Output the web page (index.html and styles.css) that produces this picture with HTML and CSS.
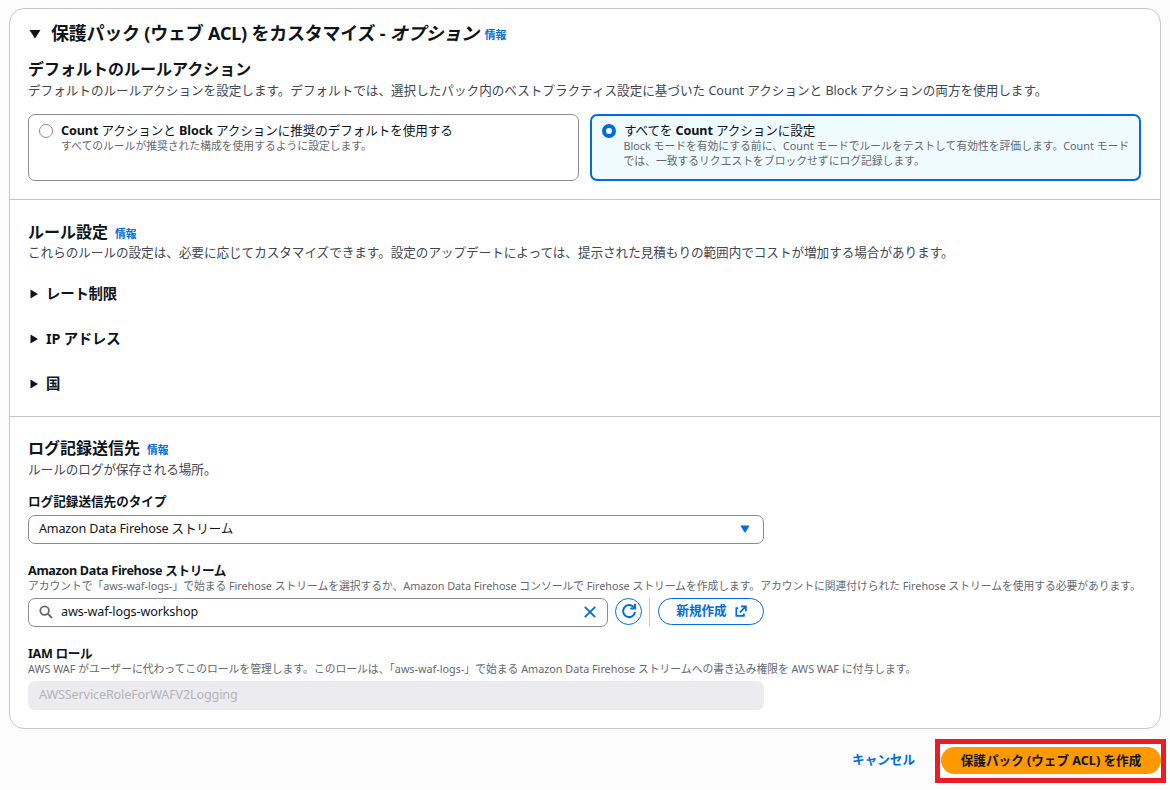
FILE: index.html
```html
<!DOCTYPE html>
<html lang="ja">
<head>
    <meta charset="UTF-8">
    <meta name="viewport" content="width=device-width, initial-scale=1.0">
    <title>保護パック (ウェブ ACL) を作成</title>
    <link rel="stylesheet" href="styles.css">
</head>
<body>
    <main class="card">
        <section class="section customize">
            <h1 class="card-title">
                <svg class="caret-down" viewBox="0 0 12 10"><path d="M.5 1h11L6 9.5z"/></svg>
                <span class="card-title-text">保護パック (ウェブ ACL) をカスタマイズ - <i>オプション</i></span>
                <a class="info" href="#">情報</a>
            </h1>
            <h2><span class="h2-text">デフォルトのルールアクション</span></h2>
            <p class="description desc-action">デフォルトのルールアクションを設定します。デフォルトでは、選択したパック内のベストプラクティス設定に基づいた Count アクションと Block アクションの両方を使用します。</p>
            <div class="tiles">
                <label class="tile">
                    <span class="radio"></span>
                    <span class="tile-body">
                        <span class="tile-label"><b>Count</b> アクションと <b>Block</b> アクションに推奨のデフォルトを使用する</span>
                        <span class="hint">すべてのルールが推奨された構成を使用するように設定します。</span>
                    </span>
                </label>
                <label class="tile selected">
                    <span class="radio"></span>
                    <span class="tile-body">
                        <span class="tile-label">すべてを <b>Count</b> アクションに設定</span>
                        <span class="hint">Block モードを有効にする前に、Count モードでルールをテストして有効性を評価します。Count モード<br>では、一致するリクエストをブロックせずにログ記録します。</span>
                    </span>
                </label>
            </div>
        </section>

        <section class="section rules">
            <h2><span class="h2-text">ルール設定</span><a class="info" href="#">情報</a></h2>
            <p class="description">これらのルールの設定は、必要に応じてカスタマイズできます。設定のアップデートによっては、提示された見積もりの範囲内でコストが増加する場合があります。</p>
            <div class="expanders">
                <div class="expander"><svg class="caret-right" viewBox="0 0 8 10"><path d="M.5.5v9L8 5z"/></svg><span>レート制限</span></div>
                <div class="expander"><svg class="caret-right" viewBox="0 0 8 10"><path d="M.5.5v9L8 5z"/></svg><span>IP アドレス</span></div>
                <div class="expander"><svg class="caret-right" viewBox="0 0 8 10"><path d="M.5.5v9L8 5z"/></svg><span>国</span></div>
            </div>
        </section>

        <section class="section logging">
            <h2><span class="h2-text">ログ記録送信先</span><a class="info" href="#">情報</a></h2>
            <p class="description">ルールのログが保存される場所。</p>

            <div class="field">
                <h3>ログ記録送信先のタイプ</h3>
                <div class="control select">
                    <span class="latin">Amazon Data Firehose ストリーム</span>
                    <svg class="caret-blue" viewBox="0 0 10 8"><path d="M.3.5h9.4L5 8z"/></svg>
                </div>
            </div>

            <div class="field">
                <h3 class="latin-bold">Amazon Data Firehose ストリーム</h3>
                <p class="hint hint-stream">アカウントで「aws-waf-logs-」で始まる Firehose ストリームを選択するか、Amazon Data Firehose コンソールで Firehose ストリームを作成します。アカウントに関連付けられた Firehose ストリームを使用する必要があります。</p>
                <div class="stream-row">
                    <div class="control search">
                        <svg class="search-icon" viewBox="0 0 14 14"><circle cx="5.6" cy="5.6" r="4.3"/><path d="M8.7 8.7l4.3 4.3"/></svg>
                        <span class="latin">aws-waf-logs-workshop</span>
                        <svg class="clear-icon" viewBox="0 0 12 12"><path d="M.8.8l10.4 10.4M11.2.8L.8 11.2"/></svg>
                    </div>
                    <button class="refresh" aria-label="更新">
                        <svg viewBox="0 0 16 16"><path d="M14 9A6 6 0 1 1 12.4 3.9L13.8 5.2"/><path d="M14 .8v4.7H9.3"/></svg>
                    </button>
                    <span class="separator"></span>
                    <button class="create-new">
                        <span>新規作成</span>
                        <svg viewBox="0 0 12 12"><path d="M3.2 3.2H1.3v7.6h7.6V8.6M6 1.3h4.9v4.9M10.9 1.3L4.9 7.3"/></svg>
                    </button>
                </div>
            </div>

            <div class="field">
                <h3 class="latin-bold">IAM ロール</h3>
                <p class="hint">AWS WAF がユーザーに代わってこのロールを管理します。このロールは、「aws-waf-logs-」で始まる Amazon Data Firehose ストリームへの書き込み権限を AWS WAF に付与します。</p>
                <div class="control disabled"><span class="latin">AWSServiceRoleForWAFV2Logging</span></div>
            </div>
        </section>
    </main>

    <footer class="actions">
        <a class="cancel" href="#">キャンセル</a>
        <div class="highlight">
            <button class="submit">保護パック (ウェブ ACL) を作成</button>
        </div>
    </footer>
</body>
</html>
```
FILE: styles.css
```css
* {
    margin: 0;
    padding: 0;
    box-sizing: border-box;
}

body {
    font-family: "Noto Sans", "Noto Sans CJK JP", sans-serif;
    font-size: 12.6px;
    color: #0f141a;
    background-color: #fcfcfd;
    height: 790px;
    overflow: hidden;
    white-space: nowrap;
}

a {
    color: #006ce0;
    text-decoration: none;
}

button {
    font: inherit;
    cursor: pointer;
}

svg {
    display: block;
    flex: none;
    fill: none;
}

.card {
    width: 1152px;
    height: 721px;
    margin: 8px 0 0 9px;
    background-color: #fff;
    border: 1px solid #c6c6cd;
    border-radius: 15px;
}

.section {
    padding: 0 19px 0 18px;
}

.section + .section {
    border-top: 1px solid #c6c6cd;
}

.customize {
    height: 190px;
    padding-top: 12px;
}

.rules {
    height: 217px;
    padding-top: 22px;
}

.logging {
    padding-top: 21px;
}

.card-title {
    display: flex;
    align-items: center;
    height: 24px;
    font-size: 18px;
    line-height: 24px;
}

.card-title-text {
    letter-spacing: -0.22px;
}

.caret-down {
    width: 12px;
    height: 10px;
    margin: 1px 10px 0 1px;
    fill: #0f141a;
}

h2 {
    display: flex;
    align-items: center;
    height: 20px;
    font-size: 16px;
    line-height: 20px;
}

.customize h2 {
    margin-top: 14px;
}

.info {
    margin: 4px 0 0 7px;
    font-size: 10.8px;
    font-weight: 700;
}

.card-title .info {
    margin-left: 6px;
}

.description {
    height: 18px;
    margin-top: 2px;
    line-height: 18px;
    letter-spacing: -0.03px;
    color: #424650;
}

.desc-action,
.logging .description {
    margin-top: 3px;
}

.desc-action {
    letter-spacing: -0.01px;
}

.tiles {
    display: grid;
    grid-template-columns: 1fr 1fr;
    gap: 11px;
    margin-top: 14px;
}

.tile {
    display: flex;
    height: 67px;
    padding: 7px 9px 0 10px;
    border: 1px solid #8c8c94;
    border-radius: 7px;
}

.tile.selected {
    padding: 6px 8px 0 10px;
    border: 2px solid #006ce0;
    background-color: #f0fbff;
}

.radio {
    flex: none;
    width: 14px;
    height: 14px;
    margin: 2px 8px 0 0;
    border: 1px solid #8c8c94;
    border-radius: 50%;
    background-color: #fff;
}

.selected .radio {
    border: 4.5px solid #006ce0;
}

.selected .hint {
    margin-left: -0.5px;
}

.tile-body {
    display: flex;
    flex-direction: column;
}

.tile-label {
    height: 17px;
    line-height: 17px;
    letter-spacing: -0.1px;
}

.hint {
    font-size: 10.8px;
    line-height: 14.5px;
    color: #656871;
}

.hint-stream {
    letter-spacing: -0.035px;
}

.expanders {
    display: flex;
    flex-direction: column;
    gap: 25px;
    margin-top: 22px;
}

.expander {
    display: flex;
    align-items: center;
    gap: 8px;
    height: 20px;
    padding-left: 2px;
    font-size: 14.4px;
    line-height: 20px;
    letter-spacing: -0.2px;
    font-weight: 700;
}

.expander span {
    margin-top: -1px;
}

.caret-right {
    width: 8px;
    height: 10px;
    fill: #0f141a;
}

h3 {
    height: 18px;
    font-size: 12.6px;
    line-height: 18px;
}

.latin {
    letter-spacing: -0.13px;
}

.latin-bold {
    line-height: 20px;
    letter-spacing: -0.32px;
}

.field {
    margin-top: 17px;
}

.description + .field {
    margin-top: 14px;
}

.control {
    display: flex;
    align-items: center;
    width: 736px;
    height: 29px;
    padding: 0 13px 2px 10px;
    border: 1px solid #8c8c94;
    border-radius: 7px;
    line-height: 18px;
}

.select {
    margin-top: 4px;
    justify-content: space-between;
}

.select .latin {
    letter-spacing: -0.18px;
}

.caret-blue {
    width: 10px;
    height: 8px;
    margin-top: 1px;
    fill: #006ce0;
}

.stream-row {
    display: flex;
    margin-top: 4px;
}

.search {
    width: 580px;
    padding-right: 11px;
}

.search .latin {
    margin-top: 1px;
}

.search-icon {
    width: 14px;
    height: 14px;
    margin: 2px 8px 0 0;
    stroke: #656871;
    stroke-width: 1.8;
}

.clear-icon {
    width: 12px;
    height: 12px;
    margin: 2px 0 0 auto;
    stroke: #006ce0;
    stroke-width: 1.8;
}

.refresh {
    display: flex;
    align-items: center;
    justify-content: center;
    width: 27px;
    height: 27px;
    margin-left: 7px;
    border: 1px solid #006ce0;
    border-radius: 50%;
    background-color: #fff;
}

.refresh svg {
    width: 16px;
    height: 16px;
    stroke: #006ce0;
    stroke-width: 2;
}

.separator {
    width: 1px;
    height: 29px;
    margin: 0 8px 0 7px;
    background-color: #c6c6cd;
}

.create-new {
    display: flex;
    align-items: center;
    justify-content: center;
    gap: 8px;
    width: 106px;
    height: 27px;
    padding-left: 1px;
    border: 1px solid #006ce0;
    border-radius: 14px;
    background-color: #fff;
    color: #006ce0;
    font-weight: 700;
}

.create-new span {
    margin-top: -3px;
}

.create-new svg {
    width: 12px;
    height: 12px;
    stroke: #006ce0;
    stroke-width: 1.7;
}

.stream-row + .field,
.field:last-child {
    margin-top: 17.5px;
}

.disabled {
    margin-top: 4.5px;
    border: none;
    padding-left: 11px;
    background-color: #ebebf0;
    color: #b4b4bb;
}

.actions {
    display: flex;
    align-items: flex-start;
    justify-content: flex-end;
    margin-top: 10px;
    padding-right: 4px;
}

.cancel {
    margin: 12px 20px 0 0;
    line-height: 18px;
    font-weight: 700;
}

.highlight {
    width: 231px;
    height: 44px;
    padding: 3px 0 0 1px;
    border: 5px solid #ed1c24;
    background-color: #fcfcfd;
}

.submit {
    width: 220px;
    height: 27px;
    padding-bottom: 3px;
    border: none;
    border-radius: 14px;
    background-color: #ff9900;
    color: #0f141a;
    font-weight: 700;
}
```
